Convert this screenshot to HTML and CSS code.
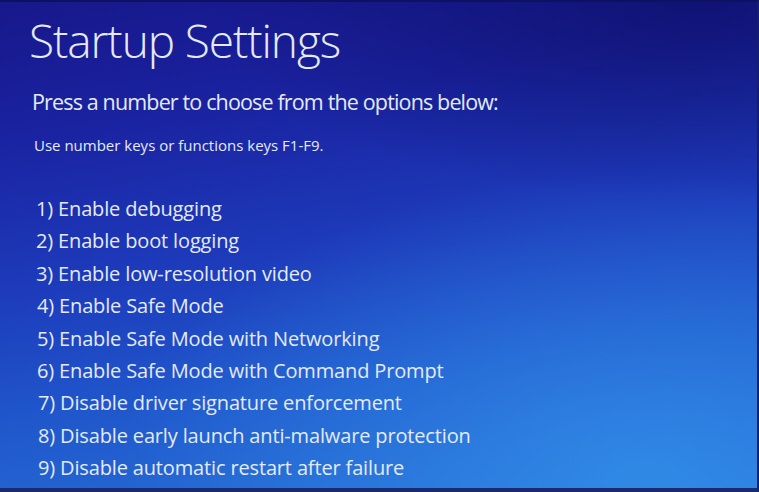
FILE: index.html
```html
<!DOCTYPE html>
<html lang="en">
<head>
<meta charset="utf-8">
<title>Startup Settings</title>
<link rel="stylesheet" href="styles.css">
</head>
<body>
<main class="screen">
  <h1 class="title">Startup Settings</h1>
  <p class="lead">Press a number to choose from the options below:</p>
  <p class="hint">Use number keys or functions keys F1-F9.</p>
  <ol class="options">
    <li class="opt o1">1) Enable debugging</li>
    <li class="opt o2">2) Enable boot logging</li>
    <li class="opt o3">3) Enable low-resolution video</li>
    <li class="opt o4">4) Enable Safe Mode</li>
    <li class="opt o5">5) Enable Safe Mode with Networking</li>
    <li class="opt o6">6) Enable Safe Mode with Command Prompt</li>
    <li class="opt o7">7) Disable driver signature enforcement</li>
    <li class="opt o8">8) Disable early launch anti-malware protection</li>
    <li class="opt o9">9) Disable automatic restart after failure</li>
  </ol>
</main>
</body>
</html>
```
FILE: styles.css
```css
html, body {
  margin: 0;
  padding: 0;
  width: 759px;
  height: 492px;
  overflow: hidden;
}
body {
  font-family: "Open Sans", "Noto Sans", sans-serif;
  color: #e4eaf8;
}
.screen {
  box-sizing: border-box;
  width: 759px;
  height: 492px;
  padding: 8px 0 0 29px;
  border-top: 2px solid #0e1160;
  border-right: 2px solid #16206a;
  border-bottom: 4px solid #1a2a6e;
  background:
    radial-gradient(ellipse 520px 300px at 640px 470px, rgba(56,156,240,0.6), rgba(56,156,240,0) 100%),
    radial-gradient(ellipse 500px 200px at 700px 0px, rgba(10,10,90,0.6), rgba(10,10,90,0) 100%),
    linear-gradient(172deg, #17188a 0%, #1a22a0 22%, #1d3cbc 50%, #2058cc 72%, #2670d8 100%);
}
.title {
  margin: 0;
  font-weight: 300;
  font-size: 46px;
  line-height: 60px;
  letter-spacing: -1.1px;
}
.lead {
  margin: 17px 0 0 3px;
  font-size: 21.5px;
  line-height: 30px;
  letter-spacing: -0.85px;
}
.hint {
  margin: 18px 0 0 5px;
  font-size: 15px;
  line-height: 20px;
}
.options {
  list-style: none;
  margin: 38px 0 0 7px;
  padding: 0;
  font-size: 20px;
  line-height: 32.4px;
  letter-spacing: -0.15px;
}
.o4, .o5, .o6 { padding-left: 1px; }
.o7, .o8, .o9 { padding-left: 2px; }
```
